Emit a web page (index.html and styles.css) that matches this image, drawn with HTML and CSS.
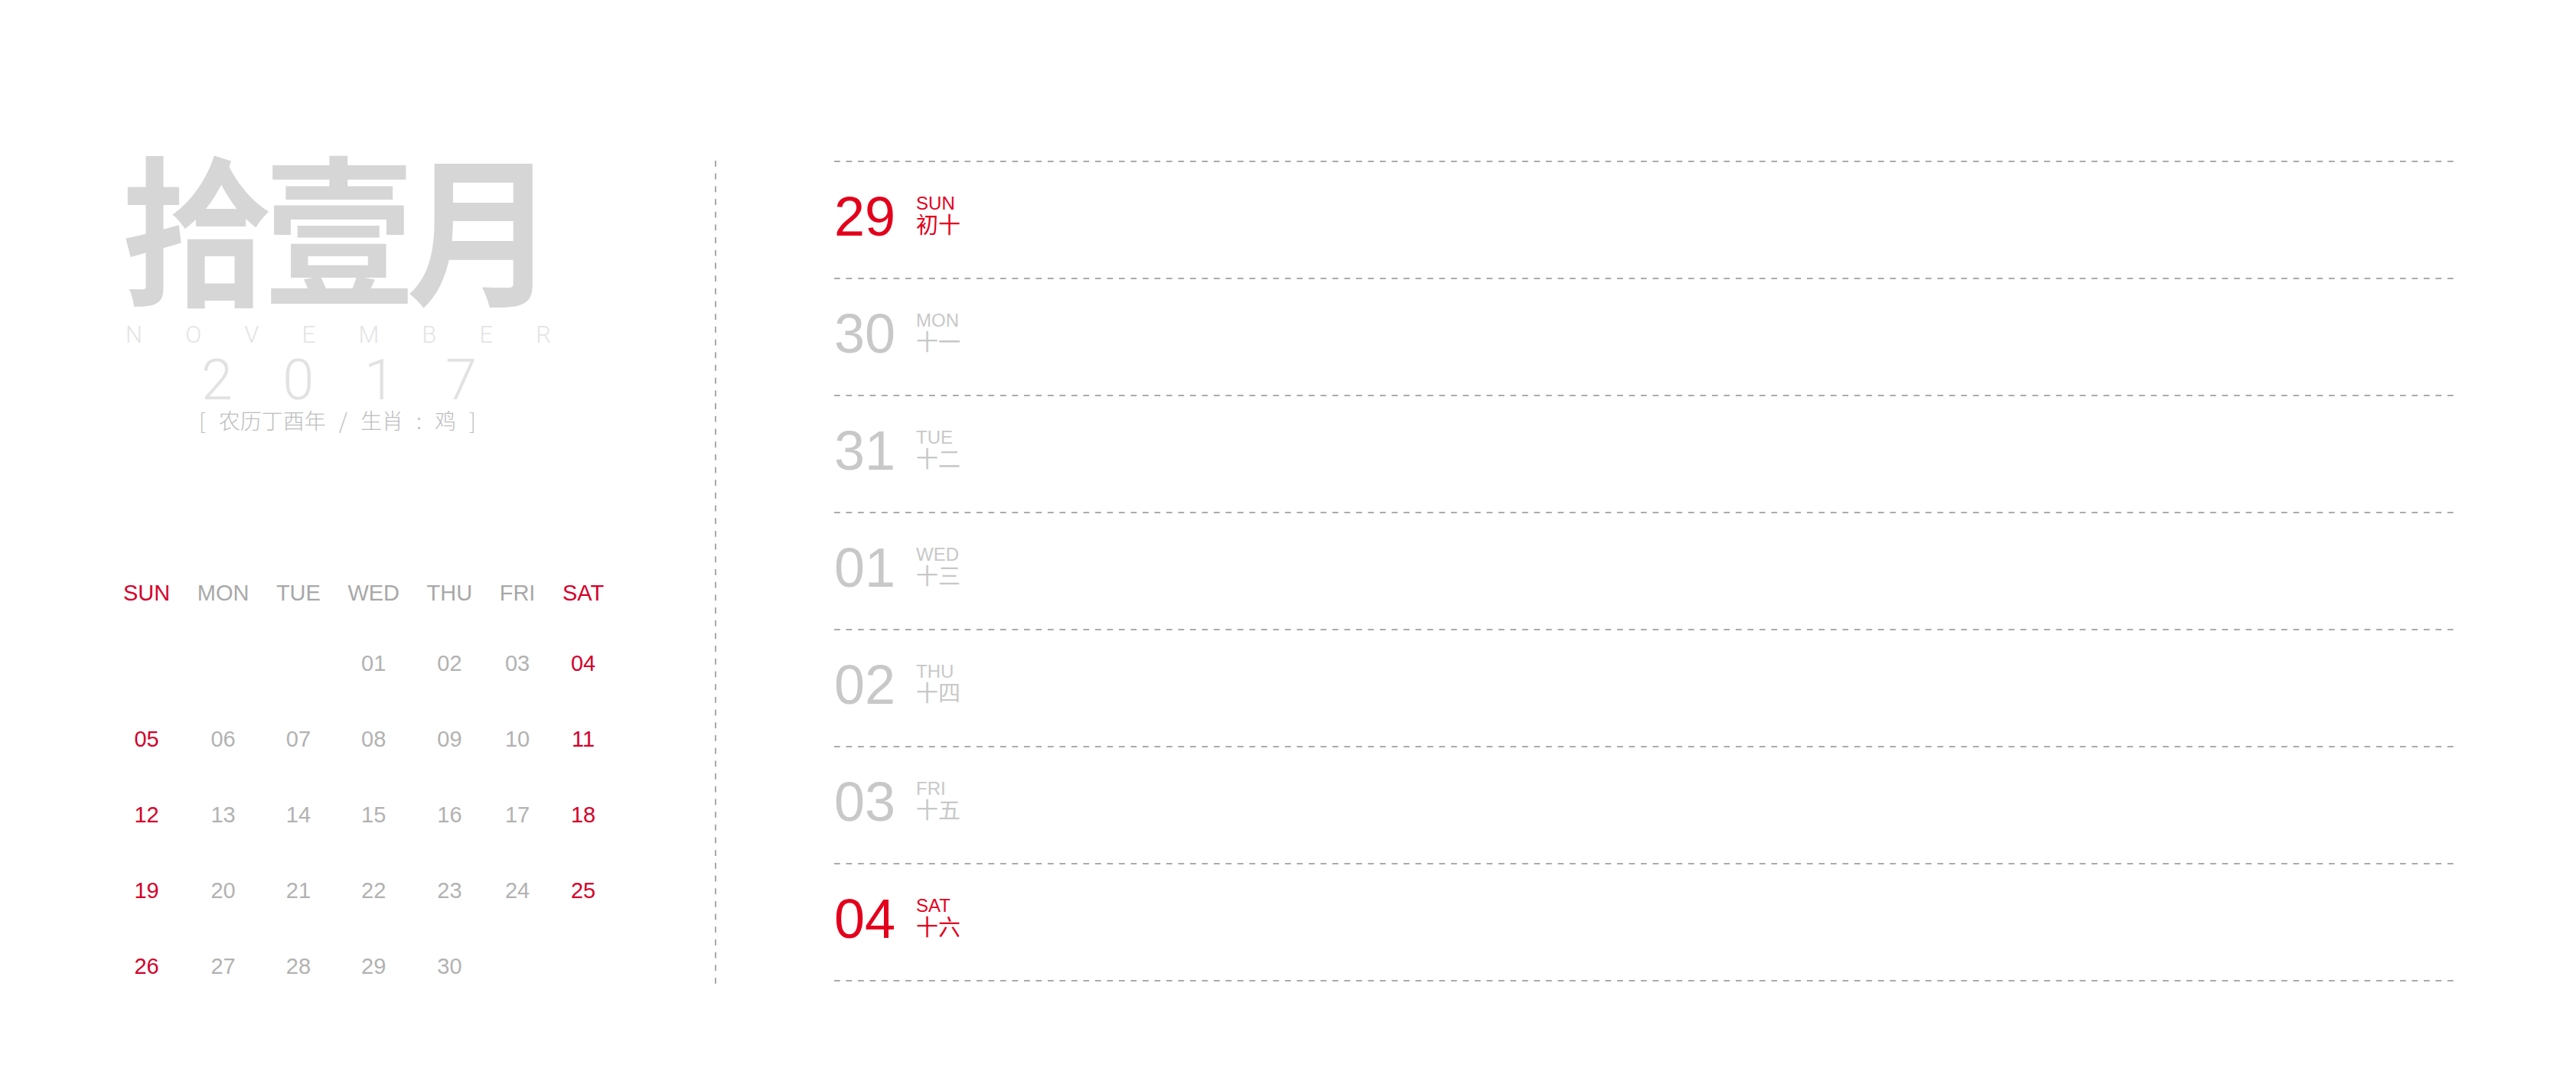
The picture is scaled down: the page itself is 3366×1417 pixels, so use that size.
FILE: index.html
```html
<!DOCTYPE html>
<html lang="zh-CN">
<head>
<meta charset="utf-8">
<title>拾壹月 2017</title>
<link rel="stylesheet" href="styles.css">
</head>
<body>
<div class="page">
  <section class="left">
    <div class="title">拾壹月</div>
    <div class="month-en"><span>N</span><span>O</span><span>V</span><span>E</span><span>M</span><span>B</span><span>E</span><span>R</span></div>
    <div class="year"><span>2</span><span>0</span><span>1</span><span>7</span></div>
    <div class="lunar"><span>[</span><span>农历丁酉年</span><span>/</span><span>生肖</span><span>:</span><span>鸡</span><span>]</span></div>
    <div class="mini">
      <div class="wd red">SUN</div><div class="wd">MON</div><div class="wd">TUE</div><div class="wd">WED</div><div class="wd">THU</div><div class="wd">FRI</div><div class="wd red">SAT</div>
      <div class="d"></div><div class="d"></div><div class="d"></div><div class="d">01</div><div class="d">02</div><div class="d">03</div><div class="d red">04</div>
      <div class="d red">05</div><div class="d">06</div><div class="d">07</div><div class="d">08</div><div class="d">09</div><div class="d">10</div><div class="d red">11</div>
      <div class="d red">12</div><div class="d">13</div><div class="d">14</div><div class="d">15</div><div class="d">16</div><div class="d">17</div><div class="d red">18</div>
      <div class="d red">19</div><div class="d">20</div><div class="d">21</div><div class="d">22</div><div class="d">23</div><div class="d">24</div><div class="d red">25</div>
      <div class="d red">26</div><div class="d">27</div><div class="d">28</div><div class="d">29</div><div class="d">30</div><div class="d"></div><div class="d"></div>
    </div>
  </section>
  <div class="divider"></div>
  <section class="list">
    <div class="row hot"><div class="num">29</div><div class="lbl"><div class="en">SUN</div><div class="cn">初十</div></div></div>
    <div class="row"><div class="num">30</div><div class="lbl"><div class="en">MON</div><div class="cn">十一</div></div></div>
    <div class="row"><div class="num">31</div><div class="lbl"><div class="en">TUE</div><div class="cn">十二</div></div></div>
    <div class="row"><div class="num">01</div><div class="lbl"><div class="en">WED</div><div class="cn">十三</div></div></div>
    <div class="row"><div class="num">02</div><div class="lbl"><div class="en">THU</div><div class="cn">十四</div></div></div>
    <div class="row"><div class="num">03</div><div class="lbl"><div class="en">FRI</div><div class="cn">十五</div></div></div>
    <div class="row hot last"><div class="num">04</div><div class="lbl"><div class="en">SAT</div><div class="cn">十六</div></div></div>
  </section>
</div>
</body>
</html>
```

FILE: styles.css
```css
html, body {
  margin: 0;
  padding: 0;
  background: #ffffff;
}

body {
  font-family: "Liberation Sans", Arial, "Noto Sans CJK SC", sans-serif;
}

.page {
  display: flex;
  align-items: flex-start;
  padding-top: 210px;
}

/* ---------- left column ---------- */
.left {
  width: 773px;
  padding-left: 161px;
  display: flex;
  flex-direction: column;
  align-items: flex-start;
}

.title {
  font-family: "Noto Sans CJK SC", sans-serif;
  font-weight: 700;
  font-size: 196px;
  line-height: 1;
  letter-spacing: -10px;
  color: #d6d6d6;
  margin-top: -24px;
  margin-left: -2px;
  margin-bottom: -4px;
  transform: scaleY(1.08);
  transform-origin: top left;
}

.month-en {
  width: 556px;
  margin-left: 3px;
  margin-top: 44px;
  display: flex;
  justify-content: space-between;
  font-family: Roboto, "Liberation Sans", sans-serif;
  font-weight: 300;
  font-size: 31px;
  line-height: 1;
  color: #e4e4e4;
}

.year {
  width: 360px;
  margin-left: 102px;
  margin-top: 7px;
  display: flex;
  justify-content: space-between;
  font-family: Roboto, "Liberation Sans", sans-serif;
  font-weight: 300;
  font-size: 74px;
  line-height: 1;
  color: #e2e2e2;
}

.lunar {
  margin-left: 99px;
  margin-top: 1px;
  display: flex;
  gap: 17px;
  font-family: "Noto Sans CJK SC", sans-serif;
  font-weight: 300;
  font-size: 28px;
  line-height: 1;
  color: #bdbdbd;
}

.mini {
  margin-top: 198px;
  display: grid;
  grid-template-columns: repeat(7, auto);
  column-gap: 35.5px;
  row-gap: 71px;
  font-size: 29px;
  line-height: 28px;
  text-align: center;
  color: #b2b2b2;
}

.mini .wd {
  margin-bottom: -7px;
  color: #a8a8a8;
}

.mini .red {
  color: #d4002a;
}

.divider {
  width: 2px;
  height: 1076px;
  background-image: linear-gradient(to bottom, #a9a9a9 0, #a9a9a9 8px, transparent 8px);
  background-size: 2px 16.7px;
  background-repeat: repeat-y;
}

/* ---------- right list ---------- */
.list {
  margin-left: 154px;
  width: 2118px;
  display: flex;
  flex-direction: column;
}

.row {
  height: 153px;
  box-sizing: border-box;
  padding-top: 37px;
  display: flex;
  align-items: flex-start;
  gap: 27px;
  color: #c8c8c8;
  background-image: linear-gradient(to right, #ababab 0, #ababab 8px, transparent 8px);
  background-size: 15.5px 2px;
  background-repeat: repeat-x;
  background-position: 0 0;
}

.row.last {
  height: 155px;
  background-image:
    linear-gradient(to right, #ababab 0, #ababab 8px, transparent 8px),
    linear-gradient(to right, #ababab 0, #ababab 8px, transparent 8px);
  background-size: 15.5px 2px, 15.5px 2px;
  background-position: 0 0, 0 100%;
}

.row.hot {
  color: #e3001c;
}

.num {
  font-size: 72px;
  line-height: 1;
}

.lbl {
  margin-top: 7px;
  display: flex;
  flex-direction: column;
}

.lbl .en {
  font-size: 24px;
  line-height: 24px;
}

.lbl .cn {
  font-family: "Noto Sans CJK SC", sans-serif;
  font-size: 29px;
  line-height: 29px;
}
```
